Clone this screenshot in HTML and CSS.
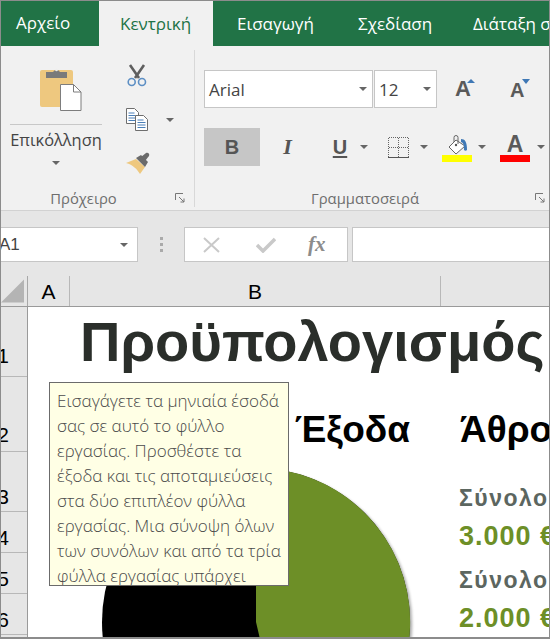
FILE: index.html
```html
<!DOCTYPE html>
<html lang="el">
<head>
<meta charset="utf-8">
<title>Excel</title>
<link rel="stylesheet" href="styles.css">
</head>
<body>
<div class="window">
  <nav class="tabs">
    <span class="tab file">Αρχείο</span>
    <span class="tab active">Κεντρική</span>
    <span class="tab insert">Εισαγωγή</span>
    <span class="tab design">Σχεδίαση</span>
    <span class="tab layout">Διάταξη σελίδας</span>
  </nav>

  <section class="ribbon">
    <div class="group clip">
      <div class="clip-body">
        <div class="paste">
          <svg class="paste-icon" width="44" height="46" viewBox="0 0 44 46">
            <rect x="0" y="5" width="33" height="37" rx="2" fill="#eec87f"/>
            <path d="M6 7h7a4 4 0 0 1 7 0h7v6H6z" fill="#7a7a7a"/>
            <circle cx="16.500" cy="5" r="1.300" fill="#eee"/>
            <path d="M20.500 19.500h13l7.500 7.500v18.500H20.500z" fill="#fff" stroke="#7d7d7d"/>
            <path d="M33.500 19.500v7.500h7.500" fill="none" stroke="#7d7d7d"/>
          </svg>
          <div class="paste-split"></div>
          <div class="paste-label">Επικόλληση</div>
          <span class="arrow paste-arrow"></span>
        </div>
        <div class="clip-tools">
          <svg width="20" height="23" viewBox="0 0 20 23">
            <path d="M3 1l9 13M17 1L8 14" stroke="#5f5f5f" stroke-width="2.600" fill="none"/>
            <circle cx="4.700" cy="18" r="3.500" fill="none" stroke="#5d8fc4" stroke-width="1.600"/>
            <circle cx="15" cy="18" r="3.500" fill="none" stroke="#5d8fc4" stroke-width="1.600"/>
          </svg>
          <div class="copy-row">
            <svg width="22" height="23" viewBox="0 0 22 23">
              <path d="M.5.5h8l4 4v11H.5z" fill="#fff" stroke="#6e6e6e"/>
              <path d="M2.500 5h6M2.500 7.500h7M2.500 10h7M2.500 12.500h7" stroke="#4a7fb8"/>
              <path d="M9.500 7.500h8l4 4v11h-12z" fill="#fff" stroke="#6e6e6e"/>
              <path d="M11.500 12h6M11.500 14.500h8M11.500 17h8M11.500 19.500h8" stroke="#4a7fb8"/>
            </svg>
            <span class="arrow"></span>
          </div>
          <svg width="24" height="22" viewBox="0 0 24 22">
            <path d="M0 11l10-4 9 8-5 7c-3-5-7-9-14-11z" fill="#eec87f"/>
            <path d="M10 6l5-3 7 7-3 5z" fill="#6b6b6b"/>
            <path d="M15 5l5-4c2-1 4 1 3 3l-4 5z" fill="#6b6b6b"/>
          </svg>
        </div>
      </div>
      <div class="group-foot clip-foot">
        <span class="group-name">Πρόχειρο</span>
        <svg class="launcher" width="10" height="10" viewBox="0 0 10 10"><path d="M.5 7V.5H8M4 4l5 5M9 5.500V9H5.500" fill="none" stroke="#777"/></svg>
      </div>
    </div>

    <div class="group font">
      <div class="font-body">
        <div class="font-row">
          <div class="combo combo-name"><span>Arial</span><span class="arrow"></span></div>
          <div class="combo combo-size"><span>12</span><span class="arrow"></span></div>
          <div class="size-btn grow">A<span class="tri up"></span></div>
          <div class="size-btn shrink">A<span class="tri down"></span></div>
        </div>
        <div class="style-row">
          <div class="btn bold on">B</div>
          <div class="btn italic">I</div>
          <div class="btn under">U</div>
          <span class="arrow a-u"></span>
          <svg class="borders" width="21" height="21" viewBox="0 0 21 21" shape-rendering="crispEdges">
            <path d="M.5.500h20M.5 10.500h20M.5.500v20M10.500.500v20M20.500.500v20" stroke="#666" stroke-dasharray="1 1" fill="none"/>
            <path d="M0 20.500h21" stroke="#555"/>
          </svg>
          <span class="arrow a-b"></span>
          <div class="swatch fill">
            <svg width="22" height="20" viewBox="0 0 22 20">
              <path d="M9 5L2 12l7 7 9-8z" fill="#fff" stroke="#666"/>
              <path d="M7 7V2.500a2 2 0 0 1 4 0V9" fill="none" stroke="#666"/>
              <circle cx="9" cy="10" r="1.200" fill="#555"/>
              <path d="M14 4c4 0 6 3 6 11-1 1-2 1-3 0 0-4 0-7-3-8z" fill="#3f78b5"/>
            </svg>
            <span class="bar yellow"></span>
          </div>
          <span class="arrow a-f"></span>
          <div class="swatch color">
            <span class="color-a">A</span>
            <span class="bar red"></span>
          </div>
          <span class="arrow a-c"></span>
        </div>
      </div>
      <div class="group-foot font-foot">
        <span class="group-name">Γραμματοσειρά</span>
        <svg class="launcher" width="10" height="10" viewBox="0 0 10 10"><path d="M.5 7V.5H8M4 4l5 5M9 5.500V9H5.500" fill="none" stroke="#777"/></svg>
      </div>
    </div>
  </section>

  <section class="formula">
    <div class="namebox"><span>A1</span><span class="arrow"></span></div>
    <div class="grip"><i></i><i></i><i></i></div>
    <div class="fx-btns">
      <svg width="18" height="16" viewBox="0 0 18 16"><path d="M1 1l15 14M16 1L1 15" stroke="#c9c9c9" stroke-width="2" fill="none"/></svg>
      <svg width="20" height="16" viewBox="0 0 20 16"><path d="M1 8l6 6L19 2" stroke="#c9c9c9" stroke-width="3.500" fill="none"/></svg>
      <span class="fx">fx</span>
    </div>
    <div class="fx-input"></div>
  </section>

  <section class="sheet">
    <div class="col-heads">
      <div class="corner"><svg width="24" height="24" viewBox="0 0 24 24"><path d="M24 0v24H0z" fill="#b4b4b4"/></svg></div>
      <div class="col col-a">A</div>
      <div class="col col-b">B</div>
      <div class="col col-c"></div>
    </div>
    <div class="body">
      <div class="row-heads">
        <div class="rh r1">1</div>
        <div class="rh r2">2</div>
        <div class="rh r3">3</div>
        <div class="rh r4">4</div>
        <div class="rh r5">5</div>
        <div class="rh r6">6</div>
      </div>
      <div class="cells">
        <h1 class="title">Προϋπολογισμός</h1>
        <h2 class="head h-out">Έξοδα</h2>
        <h2 class="head h-sum">Άθροισμα</h2>
        <div class="lab l1">Σύνολο εσόδων</div>
        <div class="val v1">3.000 €</div>
        <div class="lab l2">Σύνολο εξόδων</div>
        <div class="val v2">2.000 €</div>
      </div>
      <svg class="pie" width="330" height="180" viewBox="0 0 330 180">
        <defs><filter id="s" x="-5%" y="-5%" width="110%" height="110%"><feGaussianBlur stdDeviation="1.500"/></filter></defs>
        <circle cx="156" cy="158" r="154" fill="#000" opacity=".35" filter="url(#s)" transform="translate(1 1)"/>
        <circle cx="155" cy="157" r="154" fill="#000"/>
        <path d="M155 157V3a154 154 0 0 1 35 304z" fill="#6d8f27"/>
      </svg>
      <div class="tip">Εισαγάγετε τα μηνιαία έσοδά<br>σας σε αυτό το φύλλο<br>εργασίας. Προσθέστε τα<br>έξοδα και τις αποταμιεύσεις<br>στα δύο επιπλέον φύλλα<br>εργασίας. Μια σύνοψη όλων<br>των συνόλων και από τα τρία<br>φύλλα εργασίας υπάρχει<br>στο φύλλο εργασίας Σύνοψη.</div>
    </div>
  </section>
</div>
</body>
</html>
```
FILE: styles.css
```css
* { box-sizing: border-box; }
html, body { margin: 0; padding: 0; }
body { width: 550px; height: 639px; overflow: hidden; font-family: "Open Sans", "Noto Sans", sans-serif; }
.window { width: 550px; height: 639px; border: 1px solid #8c8c8c; border-width: 1px 1px 2px 1px; overflow: hidden; display: flex; flex-direction: column; background: #fff; }

.tabs { height: 45px; flex: none; background: #217346; display: flex; color: #fff; font-size: 17px; white-space: nowrap; overflow: hidden; }
.tab { height: 45px; line-height: 46px; flex: none; }
.tab.file { width: 98px; padding-left: 15px; line-height: 43px; }
.tab.active { width: 114px; background: #f1f1f1; color: #217346; padding-left: 21px; }
.tab.insert { width: 122px; padding-left: 24px; }
.tab.design { width: 122px; padding-left: 23px; }
.tab.layout { padding-left: 16px; }

.ribbon { height: 165px; flex: none; background: #f1f1f1; border-bottom: 1px solid #d2d2d2; display: flex; color: #444; }
.group { display: flex; flex-direction: column; position: relative; }
.group.clip { width: 194px; padding-top: 4px; }
.group.clip::after { content: ""; width: 1px; height: 157px; background: #d8d8d8; position: absolute; right: 0; top: 4px; }
.clip-body { flex: 1; display: flex; }
.paste { width: 112px; padding: 15px 0 0 9px; display: flex; flex-direction: column; }
.paste-icon { margin-left: 30px; }
.paste-split { width: 92px; height: 1px; background: #c8c8c8; margin-top: 13px; }
.paste-label { width: 92px; text-align: center; font-size: 16.400px; line-height: 20px; margin-top: 5px; color: #444; white-space: nowrap; }
.paste-arrow { margin: 11px 0 0 42px; }
.clip-tools { display: flex; flex-direction: column; padding: 14px 0 0 13px; gap: 21px; align-items: flex-start; }
.clip-tools > svg:first-child { margin-left: 1px; }
.copy-row { display: flex; align-items: center; gap: 18px; }
.group-foot { height: 24px; flex: none; display: flex; align-items: center; justify-content: center; position: relative; }
.clip-foot { padding-right: 29px; }
.font-foot { padding-right: 14px; }
.group-name { font-size: 14.800px; color: #6e6e6e; }
.launcher { position: absolute; right: 10px; top: 7px; }
.font-foot .launcher { right: 4px; }
.arrow { display: inline-block; width: 0; height: 0; border: 4px solid transparent; border-top: 4px solid #666; border-bottom: 0; flex: none; }

.group.font { flex: 1; }
.font-body { flex: 1; padding: 24px 0 0 9px; }
.font-row { display: flex; height: 38px; }
.combo { height: 38px; background: #fff; border: 1px solid #c6c6c6; display: flex; align-items: center; justify-content: space-between; padding: 0 5px 0 4px; font-size: 17px; color: #444; }
.combo-name { width: 169px; }
.combo-size { width: 63px; margin-left: 1px; }
.size-btn { font-family: "Liberation Sans", sans-serif; color: #5a5a5a; position: relative; line-height: 38px; font-weight: bold; }
.size-btn.grow { font-size: 22px; margin-left: 18px; width: 46px; }
.size-btn.shrink { font-size: 20px; margin-left: 9px; width: 20px; padding-top: 1px; }
.tri { position: absolute; width: 0; height: 0; border: 4px solid transparent; }
.tri.up { border-bottom: 4px solid #3f78b5; border-top: 0; left: 12px; top: 9px; }
.tri.down { border-top: 5px solid #3f78b5; border-bottom: 0; left: 12px; top: 9px; }

.style-row { display: flex; align-items: center; height: 38px; margin-top: 20px; }
.btn { font-family: "Liberation Sans", sans-serif; color: #555; font-size: 21px; text-align: center; line-height: 38px; flex: none; }
.btn.bold { width: 56px; height: 38px; background: #c6c6c6; font-weight: bold; font-size: 20px; }
.btn.italic { width: 55px; font-family: "Liberation Serif", serif; font-style: italic; font-weight: bold; font-size: 22px; }
.btn.under { width: 18px; margin-left: 16px; text-decoration: underline; text-underline-offset: 2px; font-weight: bold; font-size: 20px; }
.a-u { margin-left: 11px; }
.borders { margin-left: 20px; flex: none; }
.a-b { margin-left: 11px; }
.swatch { width: 30px; height: 30px; display: flex; flex-direction: column; align-items: center; justify-content: flex-end; flex: none; position: relative; }
.bar { display: block; width: 30px; height: 7px; flex: none; }
.bar.yellow { background: #ffff00; }
.bar.red { background: #ff0000; }
.fill { margin-left: 14px; }
.fill svg { margin-left: 2px; flex: none; }
.a-f { margin-left: 6px; }
.color { margin-left: 14px; }
.color-a { font-family: "Liberation Sans", sans-serif; font-weight: bold; font-size: 23px; line-height: 21px; color: #5a5a5a; }
.a-c { margin-left: 7px; }

.formula { height: 65px; flex: none; background: #e6e6e6; display: flex; align-items: flex-start; padding-top: 16px; }
.namebox { width: 148px; height: 35px; margin-left: -11px; flex: none; background: #fff; border: 1px solid #c6c6c6; display: flex; align-items: center; justify-content: space-between; padding: 0 9px 0 8px; font-size: 17px; color: #444; font-family: "Liberation Sans", sans-serif; }
.grip { width: 46px; height: 35px; flex: none; display: flex; flex-direction: column; align-items: center; justify-content: center; gap: 3px; }
.grip i { width: 3px; height: 3px; background: #aaa; display: block; }
.fx-btns { width: 164px; height: 35px; flex: none; background: #fff; border: 1px solid #c6c6c6; display: flex; align-items: center; padding-left: 18px; gap: 35px; }
.fx { font-family: "Liberation Serif", serif; font-style: italic; font-weight: bold; font-size: 21px; color: #8c8c8c; margin-left: -3px; }
.fx-input { flex: 1; height: 35px; margin-left: 4px; background: #fff; border: 1px solid #c6c6c6; border-right: 0; }

.sheet { flex: 1; min-height: 0; display: flex; flex-direction: column; background: #fff; }
.col-heads { height: 31px; flex: none; background: #e6e6e6; display: flex; border-bottom: 1px solid #9a9a9a; font-family: "Liberation Sans", sans-serif; font-size: 21px; color: #000; }
.corner { width: 27px; flex: none; border-right: 1px solid #a8a8a8; display: flex; align-items: flex-end; justify-content: flex-end; padding: 0 2px 3px 0; }
.corner svg { margin-right: 1px; }
.col { text-align: center; line-height: 32px; flex: none; border-right: 1px solid #b8b8b8; }
.col-a { width: 42px; }
.col-b { width: 371px; }
.col-c { flex: 1; border-right: 0; }
.body { flex: 1; min-height: 0; display: flex; position: relative; }
.row-heads { width: 27px; flex: none; background: #e6e6e6; border-right: 1px solid #9a9a9a; display: grid; grid-template-columns: 26px; grid-template-rows: 70px 75px 60px 41px 41px 41px; align-content: start; font-family: "Liberation Sans", sans-serif; font-size: 21px; color: #000; overflow: hidden; }
.rh { min-width: 0; border-bottom: 1px solid #b8b8b8; padding-right: 18px; display: flex; align-items: flex-end; justify-content: flex-end; line-height: 22px; padding-bottom: 3px; }
.r1 { padding-bottom: 9px; }
.r2 { padding-bottom: 5px; }
.cells { flex: 1; display: grid; grid-template-columns: 42px 371px 1fr; grid-template-rows: 70px 75px 60px 41px 41px 41px; font-family: "Liberation Sans", sans-serif; font-weight: bold; white-space: nowrap; overflow: hidden; }
.title { grid-column: 1 / 4; grid-row: 1; margin: 0; font-size: 56px; line-height: 70px; color: #2a2e2a; padding-left: 52px; font-weight: bold; }
.head { grid-row: 2; margin: 0; font-size: 37px; line-height: 40px; color: #000; align-self: start; padding-top: 33px; font-weight: bold; box-sizing: content-box; }
.h-out { grid-column: 2; justify-self: end; padding-right: 31px; }
.h-sum { grid-column: 3; padding-left: 19px; }
.lab, .val { grid-column: 3; padding-left: 18px; align-self: end; }
.lab { font-size: 23px; letter-spacing: 1.500px; color: #5c6660; line-height: 26px; }
.val { font-size: 27px; letter-spacing: 1px; color: #6d8f27; line-height: 30px; }
.l1 { grid-row: 3; padding-bottom: 1px; }
.v1 { grid-row: 4; padding-bottom: 2px; }
.l2 { grid-row: 5; padding-bottom: 1px; }
.v2 { grid-row: 6; padding-bottom: 2px; }
.pie { position: absolute; left: 100px; top: 158px; }
.tip { position: absolute; left: 48px; top: 75px; width: 240px; height: 204px; background: #ffffe5; border: 1px solid #6b6b6b; padding: 5px 0 0 7px; font-size: 17px; font-weight: 300; line-height: 25px; color: #4a4a4a; overflow: hidden; white-space: nowrap; }
```
